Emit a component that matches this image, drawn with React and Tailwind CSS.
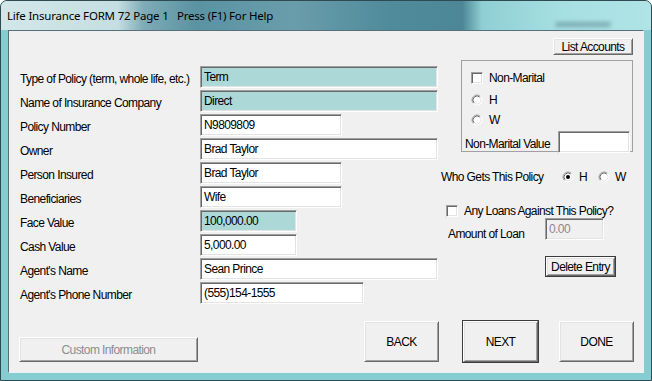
import React from "react";

const FONT = "font-['Liberation_Sans',Arial,sans-serif] text-[12px] tracking-[-0.6px]";

const ROWS = [
  ["Type of Policy (term, whole life, etc.)", "Term", "w-[238px]", true],
  ["Name of Insurance Company", "Direct", "w-[238px]", true],
  ["Policy Number", "N9809809", "w-[142px]"],
  ["Owner", "Brad Taylor", "w-[238px]"],
  ["Person Insured", "Brad Taylor", "w-[142px]"],
  ["Beneficiaries", "Wife", "w-[142px]"],
  ["Face Value", "100,000.00", "w-[97px]", true],
  ["Cash Value", "5,000.00", "w-[97px]"],
  ["Agent's Name", "Sean Prince", "w-[238px]"],
  ["Agent's Phone Number", "(555)154-1555", "w-[164px]"],
];

function TextBox({ value, className = "", teal, disabled }) {
  return (
    <div
      className={`h-[22px] shrink-0 border border-t-[#a0a0a0] border-l-[#a0a0a0] border-r-white border-b-white shadow-[inset_1px_1px_0_#696969,inset_-1px_-1px_0_#e3e3e3] pl-[3px] pt-[3px] leading-[14px] whitespace-nowrap ${
        teal ? "bg-[#acd8d8]" : disabled ? "bg-[#f0f0f0] text-[#8a8a8a]" : "bg-white"
      } ${className}`}
    >
      {value}
    </div>
  );
}

function Button({ children, className = "", isDefault, disabled }) {
  return (
    <div
      className={`shrink-0 flex items-center justify-center whitespace-nowrap bg-[#f0f0f0] ${
        isDefault ? "outline outline-1 outline-[#3c3c3c]" : ""
      } border border-t-white border-l-white border-r-[#696969] border-b-[#696969] shadow-[inset_1px_1px_0_#e3e3e3,inset_-1px_-1px_0_#a0a0a0] ${
        disabled ? "text-[#8d8d8d]" : "text-black"
      } ${className}`}
    >
      {children}
    </div>
  );
}

function CheckBox() {
  return (
    <div className="w-[12px] h-[12px] shrink-0 bg-white border border-t-[#a0a0a0] border-l-[#a0a0a0] border-r-white border-b-white shadow-[inset_1px_1px_0_#696969,inset_-1px_-1px_0_#e3e3e3]" />
  );
}

function Radio({ checked }) {
  return (
    <svg width="12" height="12" viewBox="0 0 12 12" className="shrink-0">
      <circle cx="6" cy="6" r="5" fill="#ffffff" />
      <path d="M2.46 9.54A5 5 0 0 1 9.54 2.46" fill="none" stroke="#a0a0a0" strokeWidth="1" />
      <path d="M3.17 8.83A4 4 0 0 1 8.83 3.17" fill="none" stroke="#696969" strokeWidth="1" />
      <path d="M9.54 2.46A5 5 0 0 1 2.46 9.54" fill="none" stroke="#ffffff" strokeWidth="1" />
      <path d="M8.83 3.17A4 4 0 0 1 3.17 8.83" fill="none" stroke="#e3e3e3" strokeWidth="1" />
      {checked && <circle cx="6" cy="6" r="2" fill="#000000" />}
    </svg>
  );
}

export default function App() {
  return (
    <div className={`w-[652px] h-[381px] flex flex-col bg-[#86cdd1] border border-[#2f4a50] rounded-t-[7px] overflow-hidden ${FONT} text-black`}>
      {/* title bar */}
      <div className="h-[29px] shrink-0 flex items-start bg-[linear-gradient(90deg,#d3e7e9_0%,#c4dee1_18%,#7eabb6_22%,#5a93a2_30%,#6a9dab_45%,#4f8b9b_60%,#4d8797_71%,#8fcfd3_74%,#a6dfe2_86%,#b0e4e6_100%)]">
        <span className="ml-[6px] mt-[7px] text-[11.5px] leading-[16px] tracking-[-0.2px] font-['Noto_Sans',sans-serif] text-black">
          Life Insurance FORM 72 Page 1&nbsp;&nbsp;&nbsp;Press (F1) For Help
        </span>
        <div className="ml-auto mr-[40px] mt-[21px] w-[56px] h-[5px] rounded bg-[#5d8a92] opacity-60 blur-[2px]" />
      </div>

      <div className="flex-1 flex px-[7px] pb-[7px]">
        {/* client area */}
        <div className="flex-1 flex flex-col bg-[#f0f0f0] border border-t-[#55707a] border-l-[#55707a] border-r-[#e6f3f4] border-b-[#e6f3f4]">
          <div className="flex">
            {/* left form */}
            <div className="w-[429px] pl-[11px] pt-[35px] flex flex-col gap-[2px]">
              {ROWS.map(([label, value, w, teal]) => (
                <div key={label} className="flex items-center h-[22px]">
                  <div className="w-[180px] leading-[14px] mt-[3px] whitespace-nowrap">{label}</div>
                  <TextBox value={value} className={w} teal={teal} />
                </div>
              ))}
            </div>

            {/* right panel */}
            <div className="flex-1 flex flex-col leading-[14px]">
              <Button className="self-end mr-[10px] mt-[7px] w-[80px] h-[17px]">List Accounts</Button>

              <div className="mt-[5px] ml-[23px] mr-[10px] h-[92px] border border-[#a0a0a0] flex flex-col">
                <div className="flex items-center mt-[10px] ml-[9px] gap-[6px]">
                  <CheckBox />
                  <span>Non-Marital</span>
                </div>
                <div className="flex items-center mt-[8px] ml-[9px] gap-[6px]">
                  <Radio />
                  <span>H</span>
                </div>
                <div className="flex items-center mt-[6px] ml-[9px] gap-[6px]">
                  <Radio />
                  <span>W</span>
                </div>
                <div className="flex items-center mt-[4px] ml-[3px]">
                  <span className="whitespace-nowrap mt-[4px]">Non-Marital Value</span>
                  <TextBox value="" className="ml-auto mr-[2px] w-[72px] h-[21px]" />
                </div>
              </div>

              <div className="flex items-center mt-[18px] ml-[3px] h-[14px]">
                <span className="w-[121px] whitespace-nowrap">Who Gets This Policy</span>
                <Radio checked />
                <span className="ml-[5px]">H</span>
                <div className="ml-[11px]">
                  <Radio />
                </div>
                <span className="ml-[5px]">W</span>
              </div>

              <div className="flex items-center mt-[20px] ml-[8px] gap-[6px]">
                <CheckBox />
                <span className="whitespace-nowrap">Any Loans Against This Policy?</span>
              </div>

              <div className="flex items-start ml-[10px]">
                <span className="w-[97px] mt-[9px] whitespace-nowrap">Amount of Loan</span>
                <TextBox value="0.00" disabled className="w-[59px]" />
              </div>

              <Button isDefault className="mt-[16px] ml-[108px] w-[69px] h-[19px]">Delete Entry</Button>
            </div>
          </div>

          {/* bottom buttons */}
          <div className="mt-auto mb-[10px] flex items-end">
            <Button disabled className="ml-[10px] w-[179px] h-[25px]">Custom Information</Button>
            <Button className="ml-[166px] w-[75px] h-[41px]">BACK</Button>
            <Button isDefault className="ml-[24px] w-[75px] h-[41px]">NEXT</Button>
            <Button className="ml-[21px] w-[75px] h-[41px]">DONE</Button>
          </div>
        </div>
      </div>
    </div>
  );
}
